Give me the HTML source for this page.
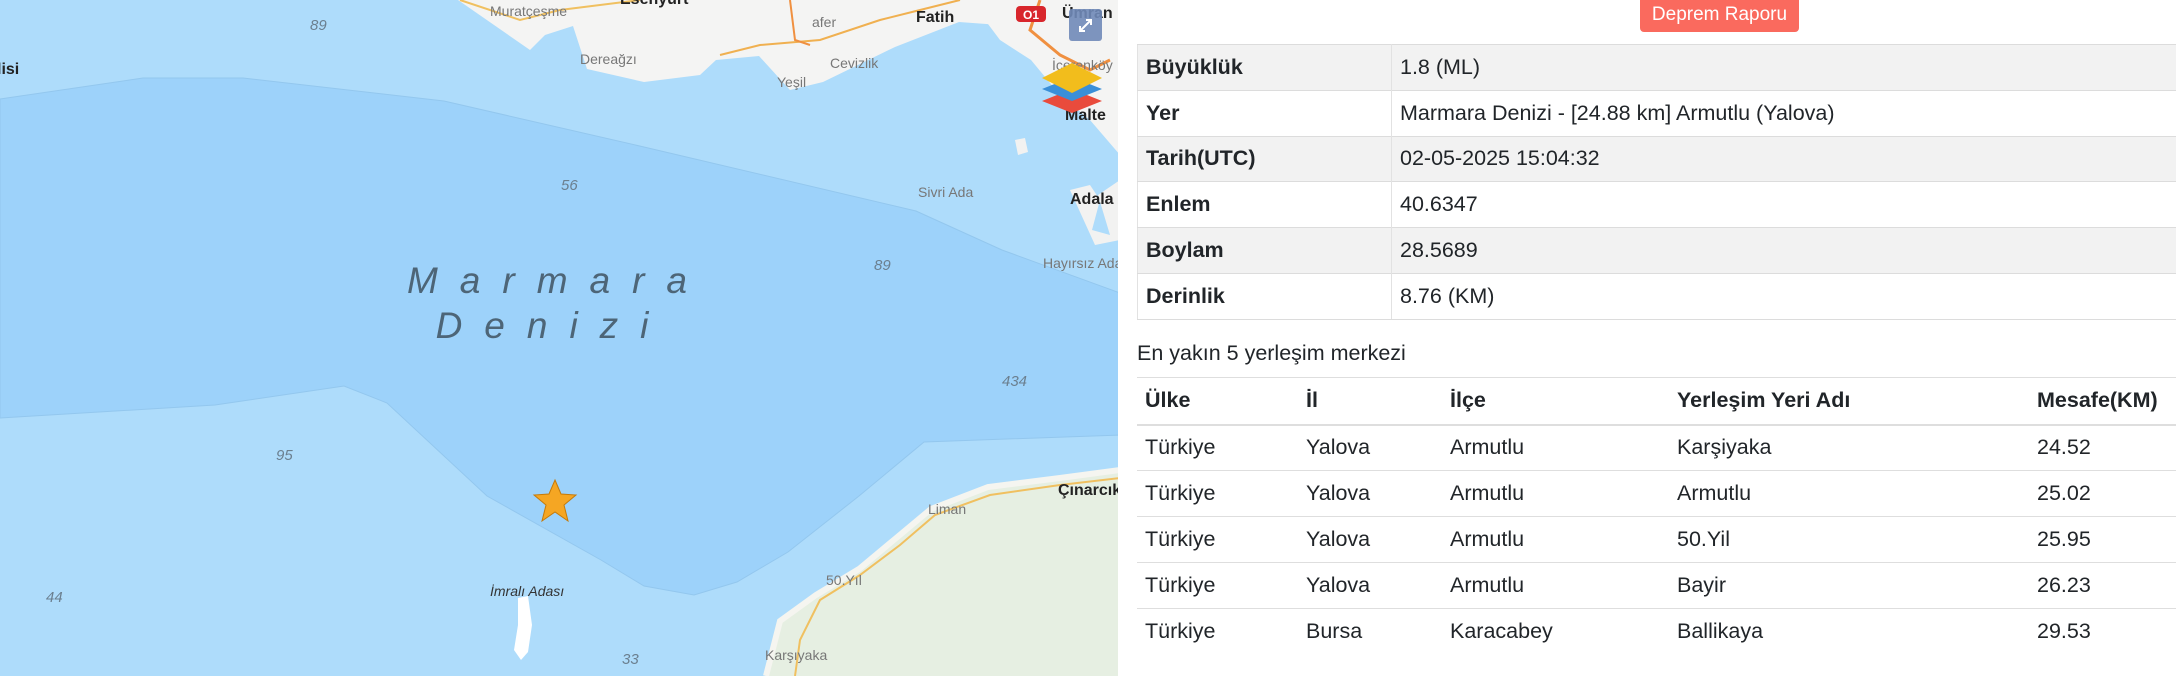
<!DOCTYPE html>
<html><head><meta charset="utf-8"><style>
*{margin:0;padding:0;box-sizing:border-box}
body{width:2176px;height:676px;overflow:hidden;background:#fff;font-family:"Liberation Sans","DejaVu Sans",sans-serif;color:#212529;position:relative}
#map{position:absolute;left:0;top:0;width:1118px;height:676px;overflow:hidden}
.btn{position:absolute;left:1640px;top:0;width:159px;height:32px;background:#fa6a5e;color:#fff;font-size:19px;line-height:30px;text-align:center;border-radius:0 0 4px 4px}
table{border-collapse:collapse;position:absolute;left:1137px;width:1039px;font-size:21.5px}
#t1{top:44px;border-left:1px solid #e2e2e2}
#t1 td{height:45.8px;border-top:1px solid #dcdcdc;padding:0 8px}
#t1 tr:nth-child(odd) td{background:#f2f2f2}
#t1 td:first-child{width:254px;font-weight:bold;border-right:1px solid #e2e2e2}
#t1 tr:last-child td{border-bottom:1px solid #dcdcdc}
.cap{position:absolute;left:1137px;top:341px;font-size:21.5px}
#t2{top:377px}
#t2 th,#t2 td{height:46px;text-align:left;padding:0 8px;border-top:1px solid #dedede}
#t2 th{height:47px;border-bottom:2px solid #dedede}
</style></head><body>
<div id="map">
<svg width="1118" height="676" viewBox="0 0 1118 676" xmlns="http://www.w3.org/2000/svg">
<rect width="1118" height="676" fill="#aedcfb"/>
<polygon fill="#9dd2fa" stroke="#93c7ee" stroke-width="1" points="0,99 143,78 243,78 444,101 644,147 916,211 1002,250 1120,293 1120,435 924,442 859,496 788,552 737,582 694,595 644,586 601,560 487,496 387,403 344,386 215,405 0,418"/>
<polygon fill="#f4f4f3" points="458,0 1003,0 1000,25 959,22 895,47 823,82 790,90 759,56 716,60 700,75 644,82 587,69 573,26 545,35 530,50"/>
<polygon fill="#f4f4f3" points="975,0 1120,0 1120,155 1090,120 1060,95 1031,60 1000,40 985,20"/>
<polygon fill="#f2f2f1" points="1015,140 1025,138 1028,152 1018,155"/>
<polygon fill="#f2f2f1" points="1070,190 1090,185 1100,200 1092,230 1110,235 1098,195 1120,180 1120,240 1095,245"/>
<polygon fill="#e6efe2" points="1120,470 1060,478 988,487 931,509 895,539 859,569 816,595 780,621 766,676 1120,676"/>
<polyline fill="none" stroke="#f5f5f0" stroke-width="6" points="1120,470 1060,478 988,487 931,509 895,539 859,569 816,595 780,621 766,676"/>
<polyline fill="none" stroke="#f0c060" stroke-width="2" points="1120,478 1060,485 990,495 935,515 900,545 860,575 820,600 800,640 795,676"/>
<polygon fill="#fff" points="518,598 528,596 532,625 528,652 521,660 514,650 518,625"/>
<polyline fill="none" stroke="#f0c060" stroke-width="2" points="460,0 520,20 560,10 640,0"/>
<polyline fill="none" stroke="#f0b050" stroke-width="2" points="720,55 760,45 820,40 880,20 920,10 960,0"/>
<polyline fill="none" stroke="#f09040" stroke-width="2" points="790,0 795,40 810,45"/>
<polyline fill="none" stroke="#f09040" stroke-width="3" points="1040,0 1030,30 1060,55 1090,70 1110,60"/>
<g font-family="Liberation Sans,sans-serif" fill="#6b7f8f" font-style="italic" font-size="15">
<text x="310" y="30">89</text><text x="561" y="190">56</text><text x="874" y="270">89</text><text x="1002" y="386">434</text><text x="276" y="460">95</text><text x="46" y="602">44</text><text x="622" y="664">33</text>
</g>
<g font-family="Liberation Sans,sans-serif" fill="#4d6577" font-style="italic" font-size="37" text-anchor="middle">
<text x="558" y="293" letter-spacing="22">Marmara</text>
<text x="553" y="338" letter-spacing="22">Denizi</text>
</g>
<g font-family="Liberation Sans,sans-serif" font-size="14" fill="#777">
<text x="490" y="16">Muratçeşme</text><text x="580" y="64">Dereağzı</text><text x="812" y="27">afer</text><text x="830" y="68">Cevizlik</text><text x="777" y="87">Yeşil</text>
<text x="918" y="197">Sivri Ada</text><text x="1043" y="268">Hayırsız Ada</text><text x="928" y="514">Liman</text><text x="826" y="585">50.Yıl</text><text x="765" y="660">Karşıyaka</text>
<text x="1052" y="70">İçerenköy</text>
</g>
<text x="490" y="596" font-family="Liberation Sans,sans-serif" font-size="14" font-style="italic" fill="#333">İmralı Adası</text>
<g font-family="Liberation Sans,sans-serif" font-size="16" font-weight="bold" fill="#222">
<text x="916" y="22">Fatih</text><text x="1070" y="204">Adala</text><text x="1058" y="495">Çınarcık</text><text x="1062" y="18">Ümran</text><text x="1065" y="120">Malte</text><text x="-3" y="74">lisi</text><text x="620" y="4">Esenyurt</text>
</g>
<rect x="1016" y="6" width="30" height="16" rx="4" fill="#d8262c"/><text x="1031" y="19" font-family="Liberation Sans,sans-serif" font-size="12" font-weight="bold" fill="#fff" text-anchor="middle">O1</text>
<rect x="1069" y="9" width="33" height="32" rx="3" fill="#7089b8" opacity=".9"/>
<path d="M1080 31 L1091 20 M1086 20 H1091 V25 M1080 26 V31 H1085" stroke="#fff" stroke-width="2" fill="none"/>
<polygon points="1042,101 1072,89 1102,101 1072,113" fill="#e94b3c"/>
<polygon points="1042,89 1072,77 1102,89 1072,101" fill="#3a8fd8"/>
<polygon points="1042,78 1072,63 1102,78 1072,93" fill="#f2bd1c"/>
<polygon points="555,480 561,494 576,495 564,505 568,521 555,512 542,521 546,505 534,495 549,494" fill="#f5a623" stroke="#c47a0a" stroke-width="1"/>
</svg>
</div>
<div class="btn">Deprem Raporu</div>
<table id="t1">
<tr><td>Büyüklük</td><td>1.8 (ML)</td></tr>
<tr><td>Yer</td><td>Marmara Denizi - [24.88 km] Armutlu (Yalova)</td></tr>
<tr><td>Tarih(UTC)</td><td>02-05-2025 15:04:32</td></tr>
<tr><td>Enlem</td><td>40.6347</td></tr>
<tr><td>Boylam</td><td>28.5689</td></tr>
<tr><td>Derinlik</td><td>8.76 (KM)</td></tr>
</table>
<div class="cap">En yakın 5 yerleşim merkezi</div>
<table id="t2">
<tr><th style="width:161px">Ülke</th><th style="width:144px">İl</th><th style="width:227px">İlçe</th><th style="width:360px">Yerleşim Yeri Adı</th><th>Mesafe(KM)</th></tr>
<tr><td>Türkiye</td><td>Yalova</td><td>Armutlu</td><td>Karşiyaka</td><td>24.52</td></tr>
<tr><td>Türkiye</td><td>Yalova</td><td>Armutlu</td><td>Armutlu</td><td>25.02</td></tr>
<tr><td>Türkiye</td><td>Yalova</td><td>Armutlu</td><td>50.Yil</td><td>25.95</td></tr>
<tr><td>Türkiye</td><td>Yalova</td><td>Armutlu</td><td>Bayir</td><td>26.23</td></tr>
<tr><td>Türkiye</td><td>Bursa</td><td>Karacabey</td><td>Ballikaya</td><td>29.53</td></tr>
</table>
</body></html>
